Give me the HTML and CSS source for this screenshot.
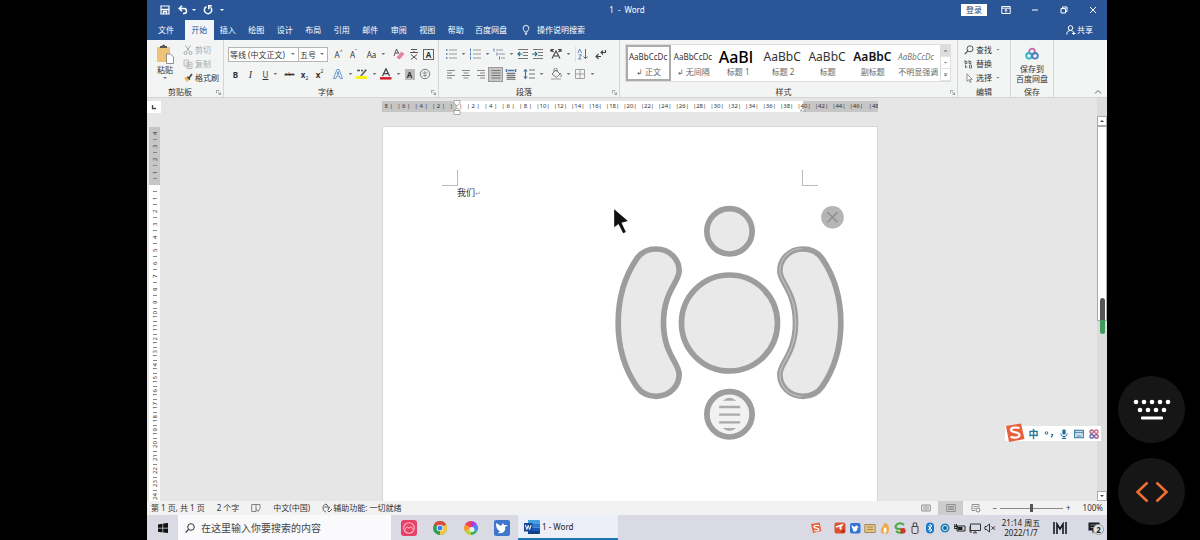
FILE: index.html
```html
<!DOCTYPE html>
<html lang="zh-CN">
<head>
<meta charset="utf-8">
<meta name="viewport" content="width=device-width, initial-scale=1">
<title>1 - Word</title>
<link rel="stylesheet" href="styles.css">
</head>
<body>
<div class="desktop">
  <header class="titlebar">
    <div class="quick">
      <button class="tbtn" aria-label="保存"><svg class="ic10" viewBox="0 0 10 10"><path d="M1 1h8v8H1z" fill="none" stroke="#fff" stroke-width="1.2"/><path d="M1 4.5h8M3.5 9V6.500h3V9" fill="none" stroke="#fff" stroke-width="1.4"/></svg></button>
      <button class="tbtn" aria-label="撤消"><svg class="ic10" viewBox="0 0 10 10"><path d="M1.500 3.500h4.500a2.500 2.500 0 0 1 0 5H5M4 .8L1.200 3.500 4 6.200" fill="none" stroke="#fff" stroke-width="1.5"/></svg></button>
      <i class="caret light"></i>
      <button class="tbtn wide" aria-label="恢复"><svg class="ic10" viewBox="0 0 10 10"><path d="M3.500 1.600a3.700 3.700 0 1 0 4 .6M8.800.8H5.800v3.400" fill="none" stroke="#fff" stroke-width="1.5"/></svg></button>
      <i class="caret light"></i>
    </div>
    <div class="doc-title">1&ensp;-&ensp;Word</div>
    <div class="window-tools">
      <button class="signin">登录</button>
      <button class="wbtn" aria-label="功能区显示选项"><svg class="ic10" viewBox="0 0 10 10"><path d="M.8 1.500h8.400v7H.8zM.8 3.200h8.400M5 7.500V4.500M3.600 5.700L5 4.400l1.400 1.300" fill="none" stroke="#fff"/></svg></button>
      <button class="wbtn" aria-label="最小化"><svg class="ic10" viewBox="0 0 10 10"><path d="M2 5h6" stroke="#fff"/></svg></button>
      <button class="wbtn" aria-label="还原"><svg class="ic10" viewBox="0 0 10 10"><path d="M2 3.500h4.500V8H2zM3.500 3.500V2h4.500v4.500H6.500" fill="none" stroke="#fff"/></svg></button>
      <button class="wbtn" aria-label="关闭"><svg class="ic10" viewBox="0 0 10 10"><path d="M2 2l6 6M8 2L2 8" stroke="#fff"/></svg></button>
    </div>
  </header>

  <nav class="tabs">
    <button class="tab file">文件</button>
    <div class="tab-set">
      <button class="tab active">开始</button><button class="tab">插入</button><button class="tab">绘图</button><button class="tab">设计</button><button class="tab">布局</button><button class="tab">引用</button><button class="tab">邮件</button><button class="tab">审阅</button><button class="tab">视图</button><button class="tab">帮助</button>
    </div>
    <button class="tab disk">百度网盘</button>
    <button class="tab tell"><svg class="ic10" viewBox="0 0 10 10"><path d="M3.800 7C3.800 5.800 2.200 5 2.200 3.200a2.800 2.800 0 0 1 5.600 0C7.800 5 6.200 5.800 6.200 7zM3.800 8.300h2.400M4.300 9.500h1.400" fill="none" stroke="#fff" stroke-width=".9"/></svg>操作说明搜索</button>
    <button class="tab share"><svg class="ic10" viewBox="0 0 10 10"><circle cx="4.500" cy="3" r="2.300" fill="none" stroke="#fff"/><path d="M.8 9.500c0-3 1.700-4 3.700-4s2.500 1 3 2M6 8.500h3.500M7.800 6.800v3" fill="none" stroke="#fff"/></svg>共享</button>
  </nav>

  <section class="ribbon" aria-label="开始">
    <div class="group g-clip">
      <div class="clip-body">
        <button class="paste"><svg class="ic20" viewBox="0 0 20 20"><path d="M2 3h13v15H2z" fill="#eec277"/><path d="M5 4V2h2a1.500 1.500 0 0 1 3 0h2v2z" fill="#555"/><path d="M11.500 10h4l3 3v6.500h-7z" fill="#fff" stroke="#777" stroke-width=".8"/></svg><span>粘贴</span><i class="caret"></i></button>
        <div class="clip-list">
          <button class="cmd off"><svg class="ic10" viewBox="0 0 10 10"><path d="M2.500.5l4 6M7.500.5l-4 6" stroke="#aaa"/><circle cx="2.500" cy="8" r="1.500" fill="none" stroke="#aaa"/><circle cx="7.500" cy="8" r="1.500" fill="none" stroke="#aaa"/></svg>剪切</button>
          <button class="cmd off"><svg class="ic10" viewBox="0 0 10 10"><path d="M1 1h4.500v6H1zM4 3.500h5v6H4zM5 5.500h3M5 7.500h3" fill="#eee" stroke="#b5b5b5" stroke-width=".9"/></svg>复制</button>
          <button class="cmd"><svg class="ic10" viewBox="0 0 10 10"><path d="M1 5l3 4 3-3-2-3z" fill="#edb95e"/><path d="M4.500 4l2.500 2.500M6 5l3-4" stroke="#444" stroke-width="1.6"/></svg>格式刷</button>
        </div>
      </div>
      <footer><span>剪贴板</span><svg class="launch" viewBox="0 0 6 6"><path d="M.5 4V.5H4M2.500 2.500l3 3M5.500 3v2.500H3" fill="none" stroke="#777" stroke-width=".8"/></svg></footer>
    </div>

    <div class="group g-font">
      <div class="rows">
        <div class="row">
          <button class="combo font-name">等线 (中文正文)<i class="caret"></i></button>
          <button class="combo font-size">五号<i class="caret"></i></button>
          <button class="ib push">A<sup>^</sup></button><button class="ib">A<sup>ˇ</sup></button>
          <button class="ib more push">Aa<i class="caret"></i></button>
          <button class="ib push" aria-label="清除格式"><svg class="ic12" viewBox="0 0 12 12"><path d="M1 8l2.500-7L6 6M2 5h3" fill="none" stroke="#555"/><path d="M3.500 9.500l5-6 3 2.500-5 5.500z" fill="#e5849a"/></svg></button>
          <button class="ib" aria-label="拼音指南"><svg class="ic12" viewBox="0 0 12 12"><path d="M3 1.500h6M2 4.500h8M6 3v2M3 6.500l6 5M9 6.500l-6 5" fill="none" stroke="#555"/></svg></button>
          <button class="ib"><b class="boxed">A</b></button>
        </div>
        <div class="row">
          <button class="ib"><b>B</b></button><button class="ib serif"><em>I</em></button><button class="ib more"><u>U</u><i class="caret"></i></button>
          <button class="ib tiny"><s>abc</s></button><button class="ib"><b>x</b><sub>2</sub></button><button class="ib"><b>x</b><sup>2</sup></button>
          <button class="ib more push" aria-label="文本效果"><svg class="ic12" viewBox="0 0 12 12"><path d="M1.500 10.500L5 1.500h2l3.500 9H8.200L7.500 8h-3l-.7 2.500zM5 6.300h2L6 3.500z" fill="#fff" stroke="#568bc4" stroke-width=".9"/></svg><i class="caret"></i></button>
          <button class="ib more" aria-label="突出显示"><svg class="ic12" viewBox="0 0 12 12"><path d="M1 2.500h3M5 2.500h2" stroke="#555" stroke-width="1.500"/><path d="M4 8l5.500-7 1.500 1.200L5.500 8.500z" fill="#666"/><path d="M0 9.500h11" stroke="#f7f01e" stroke-width="3"/></svg><i class="caret"></i></button>
          <button class="ib more" aria-label="字体颜色"><svg class="ic12" viewBox="0 0 12 12"><path d="M2.500 8L6 .8 9.500 8M3.700 5.700h4.600" fill="none" stroke="#444" stroke-width="1.300"/><path d="M0 10.300h11.500" stroke="#d4202b" stroke-width="2.500"/></svg><i class="caret"></i></button>
          <button class="ib"><b class="shade">A</b></button>
          <button class="ib" aria-label="带圈字符"><svg class="ic12" viewBox="0 0 12 12"><circle cx="6" cy="6" r="4.700" fill="none" stroke="#777"/><path d="M3.500 5h5M6 3v6M4 7.500h4" stroke="#888" stroke-width=".9"/></svg></button>
        </div>
      </div>
      <footer><span>字体</span><svg class="launch" viewBox="0 0 6 6"><path d="M.5 4V.5H4M2.500 2.500l3 3M5.500 3v2.500H3" fill="none" stroke="#777" stroke-width=".8"/></svg></footer>
    </div>

    <div class="group g-para">
      <div class="rows">
        <div class="row">
          <button class="ib more" aria-label="项目符号"><svg class="ic12" viewBox="0 0 12 12"><path d="M4 2h8M4 6h8M4 10h8" stroke="#999"/><path d="M1 2h1.500M1 6h1.500M1 10h1.500" stroke="#4d7fb5" stroke-width="1.500"/></svg><i class="caret"></i></button>
          <button class="ib more" aria-label="编号"><svg class="ic12" viewBox="0 0 12 12"><path d="M4 2h8M4 6h8M4 10h8" stroke="#999"/><path d="M1.500 .5v3M1.500 4.500v3M1.500 8.500v3" stroke="#4d7fb5"/></svg><i class="caret"></i></button>
          <button class="ib more" aria-label="多级列表"><svg class="ic12" viewBox="0 0 12 12"><path d="M3 2h7M5.500 6H12M8 10h4" stroke="#999"/><path d="M1 .5v3M4 4.500v3M6.500 8.500v3" stroke="#4d7fb5"/></svg><i class="caret"></i></button>
          <button class="ib" aria-label="减少缩进量"><svg class="ic12" viewBox="0 0 12 12"><path d="M1 1.500h10M6 4.500h5M6 7.500h5M1 10.500h10" stroke="#777"/><path d="M5.500 6H1M3 4L1 6l2 2" fill="none" stroke="#25767b" stroke-width="1.200"/></svg></button>
          <button class="ib" aria-label="增加缩进量"><svg class="ic12" viewBox="0 0 12 12"><path d="M1 1.500h10M6 4.500h5M6 7.500h5M1 10.500h10" stroke="#777"/><path d="M0 6h4.500M3 4l2 2-2 2" fill="none" stroke="#25767b" stroke-width="1.200"/></svg></button>
          <button class="ib more push" aria-label="中文版式"><svg class="ic12" viewBox="0 0 12 12"><path d="M2 10.500L6 3l4 7.500M4 8h4M1 4V1.500h3M11 4V1.500H8M1 1.500l2.500 2.500M11 1.500L8.500 4" fill="none" stroke="#444" stroke-width="1.100"/></svg><i class="caret"></i></button>
          <button class="ib push rule" aria-label="排序"><svg class="ic12" viewBox="0 0 12 12"><path d="M1 5l1.700-4L4.500 5M1.500 6.800h3L1.500 11h3" fill="none" stroke="#4d7fb5" stroke-width=".9"/><path d="M8.500 1v9.500M6.500 8.500l2 2.200 2-2.200" fill="none" stroke="#666"/></svg></button>
          <button class="ib push" aria-label="显示编辑标记"><svg class="ic12" viewBox="0 0 12 12"><path d="M1 8.500h5M3.500 6L1 8.500 3.500 11M6 4.500h4.500V2M8 2.500l-2 2 2 2" fill="none" stroke="#444" stroke-width="1.100"/></svg></button>
        </div>
        <div class="row">
          <button class="ib" aria-label="左对齐"><svg class="ic12" viewBox="0 0 12 12"><path d="M2 2.500h8M2 5h5M2 7.500h8M2 10h5" stroke="#888"/></svg></button>
          <button class="ib" aria-label="居中"><svg class="ic12" viewBox="0 0 12 12"><path d="M2 2.500h8M3.500 5h5M2 7.500h8M3.500 10h5" stroke="#888"/></svg></button>
          <button class="ib" aria-label="右对齐"><svg class="ic12" viewBox="0 0 12 12"><path d="M2 2.500h8M5 5h5M2 7.500h8M5 10h5" stroke="#888"/></svg></button>
          <button class="ib on" aria-label="两端对齐"><svg class="ic12" viewBox="0 0 12 12"><path d="M1.500 2.500h9M1.500 5h9M1.500 7.500h9M1.500 10h9" stroke="#777"/></svg></button>
          <button class="ib" aria-label="分散对齐"><svg class="ic12" viewBox="0 0 12 12"><path d="M2 4h8v7H2z" fill="#c9ccd0"/><path d="M1.500 1v3M10.500 1v3M3 2.500h6" stroke="#45719d" stroke-width="1.500"/><path d="M1.500 5.500h9M1.500 7.500h9M1.500 9.500h9M1.500 11.300h9" stroke="#777"/></svg></button>
          <button class="ib more push" aria-label="行距"><svg class="ic12" viewBox="0 0 12 12"><path d="M6 2h6M6 6h6M6 10h6" stroke="#777"/><path d="M2.500 1.500v9M.8 3.500l1.700-2 1.700 2M.8 8.500l1.700 2 1.700-2" fill="none" stroke="#45719d" stroke-width="1.100"/></svg><i class="caret"></i></button>
          <button class="ib more push" aria-label="底纹"><svg class="ic12" viewBox="0 0 12 12"><path d="M2 6l4-4 4 4-3.500 3.500zM4 4V1.500a1.500 1.500 0 0 1 3 0V4" fill="none" stroke="#777"/><path d="M10 5c1.500 2 1.500 3 .5 4" fill="none" stroke="#777"/><path d="M1 11h10" stroke="#bbb" stroke-width="1.500"/></svg><i class="caret"></i></button>
          <button class="ib more" aria-label="边框"><svg class="ic12" viewBox="0 0 12 12"><path d="M1.500 1.500h9v9h-9zM6 1.500v9M1.500 6h9" fill="none" stroke="#999" stroke-width=".9"/></svg><i class="caret"></i></button>
        </div>
      </div>
      <footer><span>段落</span><svg class="launch" viewBox="0 0 6 6"><path d="M.5 4V.5H4M2.500 2.500l3 3M5.500 3v2.500H3" fill="none" stroke="#777" stroke-width=".8"/></svg></footer>
    </div>

    <div class="group g-style">
      <div class="gallery">
        <button class="style sel"><span class="s-body">AaBbCcDc</span><small>↲ 正文</small></button>
        <button class="style"><span class="s-body">AaBbCcDc</span><small>↲ 无间隔</small></button>
        <button class="style"><span class="s-h1">AaBl</span><small>标题 1</small></button>
        <button class="style"><span class="s-h2">AaBbC</span><small>标题 2</small></button>
        <button class="style"><span class="s-h2">AaBbC</span><small>标题</small></button>
        <button class="style"><span class="s-sub">AaBbC</span><small>副标题</small></button>
        <button class="style"><span class="s-em">AaBbCcDc</span><small>不明显强调</small></button>
        <div class="gal-scroll"><button class="dim" aria-label="上一行"><i class="caret up"></i></button><button aria-label="下一行"><i class="caret"></i></button><button aria-label="其他"><i class="caret bar"></i></button></div>
      </div>
      <footer><span>样式</span><svg class="launch" viewBox="0 0 6 6"><path d="M.5 4V.5H4M2.500 2.500l3 3M5.500 3v2.500H3" fill="none" stroke="#777" stroke-width=".8"/></svg></footer>
    </div>

    <div class="group g-edit">
      <div class="edit-list">
        <button class="cmd"><svg class="ic10" viewBox="0 0 10 10"><circle cx="6" cy="3.800" r="3" fill="none" stroke="#555"/><path d="M3.800 6L.8 9.200" stroke="#555" stroke-width="1.200"/></svg>查找<i class="caret"></i></button>
        <button class="cmd"><svg class="ic10" viewBox="0 0 10 10"><path d="M1 1v3.500h2V2.500H1M5 1v3.500h2V2.500H5M5.500 6h2v3h-2zM3.500 8L1 8M1.500 5.500V9" fill="none" stroke="#666" stroke-width=".9"/></svg>替换</button>
        <button class="cmd"><svg class="ic10" viewBox="0 0 10 10"><path d="M3 .8v7.500l1.800-1.600L6 9.500l1-.5-1.200-2.600h2.400z" fill="#fff" stroke="#777" stroke-width=".8"/></svg>选择<i class="caret"></i></button>
      </div>
      <footer><span>编辑</span></footer>
    </div>

    <div class="group g-save">
      <button class="save-disk"><svg class="ic14" viewBox="0 0 14 14"><g fill="none" stroke-width="1.800"><circle cx="7" cy="4.500" r="2.800" stroke="#c565a8"/><circle cx="4" cy="8.800" r="2.800" stroke="#26b5c8"/><circle cx="10" cy="8.800" r="2.800" stroke="#4b7fc4"/></g></svg><span>保存到<br>百度网盘</span></button>
      <footer><span>保存</span></footer>
    </div>
    <button class="collapse" aria-label="折叠功能区"><svg class="ic10" viewBox="0 0 10 10"><path d="M2 6.500L5 3.500l3 3" fill="none" stroke="#666"/></svg></button>
  </section>

  <main class="workspace">
    <div class="left-rail">
      <div class="corner"><svg class="ic6" viewBox="0 0 6 6"><path d="M1.500 1v3.500H5" fill="none" stroke="#444" stroke-width="1.300"/></svg></div>
      <div class="vruler">
        <div class="v dark"><span>4</span></div><div class="v dark"><span>3</span></div><div class="v dark"><span>2</span></div><div class="v dark"><span>1</span></div><div class="v zero"></div>
        <div class="v"><span>1</span></div><div class="v"><span>2</span></div><div class="v"><span>3</span></div><div class="v"><span>4</span></div><div class="v"><span>5</span></div><div class="v"><span>6</span></div><div class="v"><span>7</span></div><div class="v"><span>8</span></div><div class="v"><span>9</span></div><div class="v"><span>10</span></div><div class="v"><span>11</span></div><div class="v"><span>12</span></div><div class="v"><span>13</span></div><div class="v"><span>14</span></div><div class="v"><span>15</span></div><div class="v"><span>16</span></div><div class="v"><span>17</span></div><div class="v"><span>18</span></div><div class="v"><span>19</span></div><div class="v"><span>20</span></div><div class="v"><span>21</span></div><div class="v"><span>22</span></div><div class="v"><span>23</span></div><div class="v"><span>24</span></div>
      </div>
    </div>

    <div class="canvas">
      <div class="hruler">
        <div class="ticks">
          <span>| 8 |</span><span>| 6 |</span><span>| 4 |</span><span>| 2 |</span><span>|&ensp;&ensp;|</span><span>| 2 |</span><span>| 4 |</span><span>| 6 |</span><span>| 8 |</span><span>|10|</span><span>|12|</span><span>|14|</span><span>|16|</span><span>|18|</span><span>|20|</span><span>|22|</span><span>|24|</span><span>|26|</span><span>|28|</span><span>|30|</span><span>|32|</span><span>|34|</span><span>|36|</span><span>|38|</span><span>|40|</span><span>|42|</span><span>|44|</span><span>|46|</span><span>|48</span>
        </div>
        <svg class="indent" viewBox="0 0 8 16"><path d="M1 .5h6v2.500L4 6 1 3zM4 8l3 2.500H1zM1 10.500h6v4H1z" fill="#fff" stroke="#999" stroke-width=".8"/></svg>
        <svg class="indent end" viewBox="0 0 8 16"><path d="M4 8l3 3H1z" fill="#fff" stroke="#999" stroke-width=".8"/></svg>
      </div>
      <article class="page">
        <div class="crops"><i class="crop tl"></i><i class="crop tr"></i></div>
        <p class="text">我们<span class="mark">↵</span></p>
        <svg class="mouse-pad" viewBox="0 0 776 765" role="img" aria-label="虚拟鼠标">
          <g fill="#e9e9e9" stroke="#9d9d9d" stroke-width="17">
            <circle cx="388" cy="109" r="68"/>
            <circle cx="388" cy="384" r="144"/>
            <path id="wing" d="M54 383C54 300 80 235 110 191 125 169 148 162 168 162 208 162 237 192 237 228 237 262 190 290 190 383 190 476 237 504 237 538 237 574 208 604 168 604 148 604 125 597 110 575 80 531 54 466 54 383Z"/>
            <use href="#wing" transform="translate(776 0) scale(-1 1)"/>
            <circle cx="388" cy="658" r="68"/>
          </g>
          <path d="M605 161c-40 0-66 31-66 67 0 34 47 62 47 155s-47 121-47 155c0 36 26 66 66 66" fill="none" stroke="#bdbdbd" stroke-width="4"/>
          <circle cx="388" cy="658" r="58" fill="#f2f2f2"/>
          <path d="M357 636h63M357 659h63M357 682h63" stroke="#aaa" stroke-width="7"/>
          <path d="M368 617q20-18 40 0zM368 699q20 18 40 0z" fill="#aaa"/>
          <circle cx="697" cy="67" r="34" fill="#b5b5b5"/>
          <path d="M682 52l30 30M712 52l-30 30" stroke="#8d8d8d" stroke-width="4"/>
          <path d="M42 43v54l13-10 14 28 8-4-13-28 19-5z" fill="#111"/>
        </svg>
      </article>
      <div class="ime">
        <svg class="ime-logo" viewBox="0 0 20 20"><path d="M1 3l15-2.500 3.500 15.500L4 19z" fill="#e8603c"/><path d="M14.500 5c-4-1-8.500-.5-8.500 2 0 3 8.500 1.500 8.500 5 0 2.800-5 3.200-9 1.800" fill="none" stroke="#fff" stroke-width="2.200"/></svg>
        <button>中</button>
        <button aria-label="标点"><svg class="ic10" viewBox="0 0 10 10"><circle cx="2.500" cy="4" r="1.300" fill="none" stroke="#25719d"/><path d="M7 5.500h1.500v1L7 8.500" fill="none" stroke="#25719d" stroke-width="1.200"/></svg></button>
        <button aria-label="语音"><svg class="ic10" viewBox="0 0 10 10"><rect x="3.300" y=".3" width="3.400" height="5.500" rx="1.700" fill="#25719d"/><path d="M1.800 4.500c0 4 6.400 4 6.400 0M5 7.500v2M3 9.500h4" fill="none" stroke="#25719d"/></svg></button>
        <button aria-label="键盘"><svg class="ic10" viewBox="0 0 10 10"><path d="M.7 1.200h8.600v7.600H.7zM.7 3.200h8.600M2.200 5h1M4.500 5h1M6.800 5h1M2.500 7h5" fill="none" stroke="#25719d" stroke-width="1.100"/></svg></button>
        <button aria-label="工具箱"><svg class="ic10" viewBox="0 0 10 10"><g fill="none" stroke-width="1.400"><circle cx="2.700" cy="2.700" r="1.700" stroke="#a7618f"/><circle cx="7.300" cy="2.700" r="1.700" stroke="#d4677c"/><rect x="1" y="5.800" width="3.400" height="3.200" rx="1" stroke="#596db2"/><rect x="5.700" y="5.800" width="3.400" height="3.200" rx="1" stroke="#a05c94"/></g></svg></button>
      </div>
    </div>

    <div class="scrollbar">
      <button aria-label="向上"><i class="caret up"></i></button>
      <div class="thumb"></div>
      <div class="track"></div>
      <button aria-label="向下"><i class="caret"></i></button>
      <i class="pill"></i>
    </div>
  </main>

  <div class="status">
    <span>第 1 页, 共 1 页</span><span>2 个字</span>
    <svg class="ic10" viewBox="0 0 10 10"><path d="M5 1.500H.7v7H5zM5 1.500h4v3M5 6l2 2.500 2.500-4" fill="none" stroke="#777" stroke-width=".9"/></svg>
    <span>中文(中国)</span>
    <span class="access"><svg class="ic10" viewBox="0 0 10 10"><path d="M4 1C0 2 0 8 4 9M4 1l2 2M2.500 4h5L6 7M7 9l3-3M7 9L5.500 7.500" fill="none" stroke="#555"/></svg>辅助功能: 一切就绪</span>
    <div class="status-right">
      <div class="views">
        <button aria-label="阅读视图"><svg class="ic10" viewBox="0 0 10 10"><path d="M.7 2h8.600v6H.7zM5 2v6M2 4h2M2 6h2M6 4h2M6 6h2" fill="none" stroke="#888" stroke-width=".9"/></svg></button>
        <button class="on" aria-label="页面视图"><svg class="ic10" viewBox="0 0 10 10"><path d="M.7 1.500h8.600v7H.7zM2 3.500h6M2 5h6M2 6.500h6" fill="none" stroke="#888" stroke-width=".9"/></svg></button>
        <button aria-label="Web 版式"><svg class="ic10" viewBox="0 0 10 10"><path d="M1 1.500h7v3M1 1.500v6h3M2.500 3.500h4M2.500 5.500h2" fill="none" stroke="#888" stroke-width=".9"/><circle cx="7" cy="7" r="2" fill="none" stroke="#888"/></svg></button>
      </div>
      <div class="zoom"><span>−</span><input type="range" min="0" max="100" value="50" aria-label="缩放"><span>+</span></div>
    </div>
    <span>100%</span>
  </div>

  <div class="taskbar">
    <button class="start" aria-label="开始"><svg class="ic10" viewBox="0 0 10 10"><path d="M0 1.400l4.500-.7v4H0zM5.200.6L10 0v4.700H5.200zM0 5.400h4.500v4L0 8.700zM5.200 5.400H10V10l-4.800-.6z" fill="#111"/></svg></button>
    <label class="search"><svg class="ic10" viewBox="0 0 10 10"><circle cx="6" cy="4" r="3.300" fill="none" stroke="#333"/><path d="M3.700 6.300L.6 9.500" stroke="#333" stroke-width="1.100"/></svg><input type="text" placeholder="在这里输入你要搜索的内容" aria-label="搜索"></label>
    <div class="pins">
      <button aria-label="应用"><svg class="ic16" viewBox="0 0 16 16"><rect width="16" height="16" rx="3" fill="#e84169"/><circle cx="8" cy="8" r="5.300" fill="none" stroke="#fbb" stroke-width="1.100"/><path d="M4.500 9.500c0-3 3-3 3.500-1 .5-2 3.500-2 3.500 1" fill="none" stroke="#fcc"/></svg></button>
      <button aria-label="Chrome"><svg class="ic14" viewBox="0 0 14 14"><circle cx="7" cy="7" r="7" fill="#2f9e57"/><path d="M7 7L.9 3.500A7 7 0 0 1 13.100 3.500z" fill="#dd4a3c"/><path d="M7 7l6.100-3.500A7 7 0 0 1 7 14z" fill="#f5c63c"/><circle cx="7" cy="7" r="3.300" fill="#fff"/><circle cx="7" cy="7" r="2.500" fill="#3f7fe0"/></svg></button>
      <button aria-label="浏览器"><svg class="ic14" viewBox="0 0 14 14"><path d="M7 7L7 0a7 7 0 0 1 6 3.500z" fill="#a43ee0"/><path d="M7 7l6-3.500a7 7 0 0 1 0 7z" fill="#3b8bf0"/><path d="M7 7l6 3.500A7 7 0 0 1 7 14z" fill="#2fb36a"/><path d="M7 7v7a7 7 0 0 1-6-3.500z" fill="#b8d531"/><path d="M7 7l-6 3.500a7 7 0 0 1 0-7z" fill="#f79a28"/><path d="M7 7L1 3.500A7 7 0 0 1 7 0z" fill="#ef415d"/><circle cx="8" cy="8.500" r="2.500" fill="#f3ecf5"/></svg></button>
      <button aria-label="飞鸟"><svg class="ic16" viewBox="0 0 16 16"><rect width="16" height="16" rx="2" fill="#3f77cf"/><path d="M2 3l5 3 2-3 1 2h4l-3 2c1 4-2 7-7 6l2-2C3 10 2 7 2 3z" fill="#fff"/></svg></button>
    </div>
    <button class="task"><svg class="ic16" viewBox="0 0 16 16"><path d="M4 1h11a1 1 0 0 1 1 1v3H4z" fill="#45a0e0"/><path d="M4 5h12v3.500H4z" fill="#2b7cd3"/><path d="M4 8.500h12V12H4z" fill="#185abd"/><path d="M4 12h12v2a1 1 0 0 1-1 1H4z" fill="#123f87"/><path d="M0 4h8.500v8.500H0z" fill="#174a9c"/><path d="M1.500 6l1.300 4.500L4.200 6.500l1.400 4L7 6" fill="none" stroke="#fff"/></svg>1 - Word</button>
    <div class="tray">
      <svg class="ic12" viewBox="0 0 12 12"><path d="M1 2l8.500-1.500L11.500 9 3 11z" fill="#e7643c"/><path d="M9 3.500C6 3 3.500 3.500 4 5s5 .7 5 2.500-3 1.500-5 1" fill="none" stroke="#fff" stroke-width="1.200"/></svg>
      <span class="tray-gap"></span>
      <svg class="ic12" viewBox="0 0 12 12"><rect x=".5" y=".5" width="11" height="11" rx="2" fill="#dc5230"/><path d="M2 5l6-2-2 3 3 3" fill="none" stroke="#fff" stroke-width="1.500"/><circle cx="9" cy="9" r="2" fill="#b8321d"/></svg>
      <svg class="ic12" viewBox="0 0 12 12"><rect x="1" y="1" width="10.500" height="10.500" rx="2" fill="#2f76d2"/><path d="M2.500 3l3 2 2-2 .7 1.500H10L8.500 6c0 3-2 4-4.500 3.500C5 8 2.500 6 2.500 3z" fill="#fff"/></svg>
      <svg class="ic12" viewBox="0 0 12 12"><path d="M.8 2.500h10.400v8H.8z" fill="#ecc477" stroke="#8f7a50" stroke-width=".8"/><path d="M3 5h6M3 7.500h6" stroke="#8b8b80"/></svg>
      <svg class="ic12" viewBox="0 0 12 12"><path d="M6 .5c4 2 5 6 3 11H3C0 7 4 5 6 .5z" fill="#f0a945"/><path d="M6 5c3 3 1 5 0 6.500C4 10 4 7 6 5z" fill="#fff"/></svg>
      <svg class="ic12" viewBox="0 0 12 12"><path d="M10 3C6-1 0 3 2 6c2 2 7 0 7 3s-5 2-7 0" fill="none" stroke="#48a83c" stroke-width="2"/><circle cx="9" cy="8.800" r="2.700" fill="#d53329"/></svg>
      <svg class="ic12" viewBox="0 0 12 12"><path d="M3 4.500h6V10a1.500 1.500 0 0 1-1.500 1.500h-3A1.500 1.500 0 0 1 3 10zM4.300 4.500V1h3.400v3.500" fill="none" stroke="#444"/></svg>
      <svg class="ic12" viewBox="0 0 12 12"><rect x="2" y=".5" width="8" height="11" rx="4" fill="#1579c7"/><path d="M4 4l4 4-2 1.800V2.200L8 4 4 8" fill="none" stroke="#fff" stroke-width=".9"/></svg>
      <svg class="ic12" viewBox="0 0 12 12"><circle cx="6" cy="6" r="4.500" fill="#2688b9"/><circle cx="6" cy="6" r="2.400" fill="#155b93" stroke="#d8f1fa"/></svg>
      <svg class="ic12" viewBox="0 0 12 12"><path d="M3 4h8v5H3zM.8 2v2.500M2.500 2v2.500M.3 4.500h3v2h-3z" fill="none" stroke="#222"/><path d="M4 5h4.500v3H4z" fill="#222"/></svg>
      <svg class="ic12" viewBox="0 0 12 12"><path d="M1.500 2h10v6.500h-10zM4 10.800h4M6 8.500v2M1 4v6h2" fill="none" stroke="#333"/></svg>
      <svg class="ic12" viewBox="0 0 12 12"><path d="M1 4.500h1.500L5.500 2v8L2.500 7.500H1zM7.500 4.300l3.500 3.500M11 4.300L7.500 7.800" fill="none" stroke="#333"/></svg>
    </div>
    <div class="clock"><span>21:14 周五</span><span>2022/1/7</span></div>
    <svg class="mark-m" viewBox="0 0 14 12"><path d="M1 0v12M13 0v12M4 12V2l3 5 3-5v10" fill="none" stroke="#16161e" stroke-width="1.600"/></svg>
    <button class="notify" aria-label="通知"><svg class="ic12" viewBox="0 0 12 12"><path d="M.5.500h11v8H7L4.500 11.500v-3h-4z" fill="#1b1b25"/><path d="M2.500 3h7M2.500 5.500h7" stroke="#aaa" stroke-width=".7"/></svg><b>2</b></button>
  </div>
</div>

<aside class="remote">
  <button aria-label="键盘"><svg class="pad-icon" viewBox="0 0 40 24"><g fill="#fff"><circle cx="4" cy="4" r="2.300"/><circle cx="12" cy="4" r="2.300"/><circle cx="20" cy="4" r="2.300"/><circle cx="28" cy="4" r="2.300"/><circle cx="36" cy="4" r="2.300"/><circle cx="8" cy="12" r="2.300"/><circle cx="16" cy="12" r="2.300"/><circle cx="24" cy="12" r="2.300"/><circle cx="32" cy="12" r="2.300"/><rect x="9" y="18.500" width="22" height="3" rx="1"/></g></svg></button>
  <button aria-label="左右切换"><svg class="pad-icon" viewBox="0 0 40 24"><path d="M15.500 2.500L5.500 12l10 9.500M24.500 2.500l10 9.500-10 9.500" fill="none" stroke="#ee7131" stroke-width="2.500"/></svg></button>
</aside>
</body>
</html>
```

FILE: styles.css
```css
* { box-sizing: border-box; }
body {
  margin: 0;
  min-height: 100vh;
  display: grid;
  grid-template-columns: 147px minmax(0, 1fr) 93px;
  background: #000;
  color: #333;
  font: 8px/12px "Noto Sans", "Noto Sans CJK SC", sans-serif;
}
button, input { font: inherit; color: inherit; }
button { border: 0; padding: 0; margin: 0; background: none; white-space: nowrap; }
svg { display: block; flex: none; }
.ic6 { width: 6px; height: 6px; }
.ic10 { width: 10px; height: 10px; }
.ic12 { width: 12px; height: 12px; }
.ic14 { width: 14px; height: 14px; }
.ic16 { width: 16px; height: 16px; }
.ic20 { width: 20px; height: 20px; }

.caret {
  flex: none;
  width: 4px;
  height: 2px;
  background: #777;
  clip-path: polygon(0 0, 100% 0, 50% 100%);
}
.caret.light { background: #fff; }
.caret.up { clip-path: polygon(50% 0, 100% 100%, 0 100%); }
.caret.bar { height: 4px; clip-path: polygon(0 0, 100% 0, 100% 25%, 0 25%, 0 50%, 100% 50%, 50% 100%, 0 50%); }

.desktop {
  grid-column: 2;
  min-width: 0;
  height: 100vh;
  display: grid;
  grid-template-rows: 20px 20px 58px minmax(0, 1fr) 14px 25px;
  background: #e6e6e6;
}

/* Title bar */
.titlebar {
  display: grid;
  grid-template-columns: 1fr auto 1fr;
  align-items: center;
  background: #2a5698;
  color: #fff;
}
.quick { display: flex; align-items: center; padding-left: 9px; }
.tbtn { width: 18px; display: grid; place-items: center; }
.tbtn.wide { width: 24px; }
.window-tools { display: flex; justify-content: flex-end; align-items: center; }
.signin { width: 26px; height: 12px; margin-right: 4px; background: #fff; color: #2a4670; line-height: 12px; }
.wbtn { width: 29px; display: grid; place-items: center; }

/* Tabs */
.tabs { display: flex; background: #2a5698; color: #fff; }
.tab { height: 20px; line-height: 20px; text-align: center; }
.tab.file { width: 38px; }
.tab-set { flex: 0 0 285px; display: flex; }
.tab-set .tab { flex: 1; }
.tab.active { background: #f4f5f7; color: #2a5698; }
.tab.disk { width: 42px; }
.tab.tell { display: flex; align-items: center; gap: 6px; margin-left: 9px; }
.tab.share { display: flex; align-items: center; gap: 1px; margin-left: auto; padding-right: 14px; }

/* Ribbon */
.ribbon { display: flex; background: #f3f4f4; border-bottom: 1px solid #d4d4d4; }
.group {
  display: flex;
  flex-direction: column;
  justify-content: space-between;
  padding-top: 4px;
  border-right: 1px solid #d5d5d5;
}
.group footer { position: relative; height: 11px; line-height: 11px; text-align: center; }
.g-clip footer, .g-font footer, .g-para footer, .g-style footer { padding-right: 10px; }
.launch { position: absolute; right: 2px; bottom: 2px; width: 5px; height: 5px; }
.g-clip { flex: 0 0 77px; }
.g-font { flex: 0 0 215px; }
.g-para { flex: 0 0 181px; }
.g-style { flex: 0 1 338px; min-width: 0; }
.g-edit { flex: 0 0 53px; }
.g-save { flex: 0 0 43px; }

.clip-body { display: flex; }
.paste { width: 36px; display: flex; flex-direction: column; align-items: center; }
.paste span { line-height: 11px; margin-bottom: 2px; }
.clip-list, .edit-list { display: flex; flex-direction: column; gap: 3px; }
.cmd { display: flex; align-items: center; gap: 2px; height: 11px; line-height: 11px; }
.cmd .caret { margin-left: 2px; }
.cmd.off { color: #aaa; }
.edit-list { padding-left: 6px; }

.rows { display: flex; flex-direction: column; gap: 4px; padding: 2px 0 0 4px; }
.row { display: flex; align-items: center; height: 16px; }
.combo {
  height: 15px;
  line-height: 13px;
  display: flex;
  align-items: center;
  justify-content: space-between;
  padding: 0 3px 0 1px;
  border: 1px solid #b5b5b5;
  background: #fff;
}
.font-name { width: 71px; }
.font-size { width: 29px; border-left: 0; }
.ib { width: 15px; height: 15px; line-height: 15px; display: flex; align-items: center; justify-content: center; }
.ib.more { width: 24px; gap: 5px; }
.ib.push { margin-left: 3px; }
.ib.on { background: #c6c6c6; border: 1px solid #999; }
.ib.rule { border-left: 1px solid #ddd; }
.ib.serif { font-family: "Liberation Serif", serif; font-size: 10px; }
.ib.tiny { font-size: 6px; }
.ib sup, .ib sub { font-size: 5px; line-height: 8px; }
.ib sup { align-self: flex-start; }
.ib sub { align-self: flex-end; }
.boxed { width: 11px; height: 11px; line-height: 9px; border: 1px solid #666; }
.shade { width: 10px; height: 11px; line-height: 11px; background: #bbb; }

.gallery { display: flex; height: 38px; margin: 0 6px 0 5px; background: #fff; border: 1px solid #ddd; }
.style {
  flex: 1 1 0;
  min-width: 0;
  display: flex;
  flex-direction: column;
  justify-content: space-between;
  padding: 0 1px 2px;
  border: 2px solid transparent;
}
.style.sel { border-color: #ababab; }
.style span { line-height: 20px; text-align: left; }
.style small { font-size: 8px; line-height: 10px; text-align: center; color: #666; }
.s-body { font-size: 8px; }
.style .s-h1 { font-size: 16px; color: #000; font-weight: 500; }
.s-h2 { font-size: 12px; }
.s-sub { font-size: 12px; font-weight: 600; color: #111; }
.s-em { font-size: 8px; font-style: italic; color: #777; }
.gal-scroll { flex: 0 0 10px; display: grid; grid-template-rows: repeat(3, 1fr); border-left: 1px solid #ddd; }
.gal-scroll button { display: grid; place-items: center; border-bottom: 1px solid #e5e5e5; }
.gal-scroll .dim { background: #ddd; }
.save-disk { display: flex; flex-direction: column; align-items: center; gap: 3px; padding-top: 3px; line-height: 10px; }
.collapse { margin-left: auto; padding-right: 4px; display: flex; align-items: flex-end; }

/* Workspace */
.workspace { display: flex; min-height: 0; }
.left-rail { flex: 0 0 16px; display: flex; flex-direction: column; padding-top: 3px; min-height: 0; }
.corner { flex: none; width: 14px; height: 12px; display: grid; place-items: center; background: #fff; }
.vruler { flex: 1; min-height: 0; overflow: hidden; margin: 14px 3px 0 2px; background: #fff; }
.v { height: 13px; display: flex; flex-direction: column; align-items: center; }
.v::after { content: ""; width: 4px; height: 1px; background: #888; }
.v span {
  flex: 1;
  writing-mode: vertical-rl;
  transform: rotate(180deg);
  font-size: 6px;
  line-height: 10px;
  text-align: center;
}
.v.dark { background: #c6c6c6; }
.v.zero { justify-content: flex-end; background: linear-gradient(#c6c6c6 50%, #fff 50%); }

.canvas { position: relative; z-index: 1; flex: 1; min-width: 0; display: flex; flex-direction: column; align-items: center; padding-top: 3px; }
.hruler {
  position: relative;
  flex: none;
  width: 496px;
  height: 11px;
  background: linear-gradient(90deg, #c6c6c6 75px, #fff 75px, #fff 421px, #c6c6c6 421px);
}
.ticks { height: 11px; overflow: hidden; display: flex; justify-content: center; }
.ticks span { flex: 0 0 auto; width: calc(505px / 29); font-size: 6px; line-height: 11px; text-align: center; white-space: nowrap; }
.indent { position: absolute; left: 71px; top: -1px; width: 8px; height: 16px; }
.indent.end { left: 417px; }
.page {
  position: relative;
  flex: 1;
  width: 496px;
  margin-top: 14px;
  border: 1px solid #d6d6d6;
  border-bottom: 0;
  background: #fff;
}
.crops { display: flex; justify-content: space-between; padding: 43px 59px 0; }
.crop { width: 16px; height: 16px; border: 0 solid #bbb; border-bottom-width: 1px; }
.crop.tl { border-right-width: 1px; }
.crop.tr { border-left-width: 1px; }
.text { margin: 0; padding-left: 74px; font-size: 9px; line-height: 13px; }
.mark { font-size: 7px; color: #999; }
.mouse-pad { position: absolute; left: 217px; top: 68px; width: 259px; height: 255px; }

.ime { position: absolute; right: -4px; bottom: 60px; display: flex; align-items: center; height: 15px; padding-left: 21px; background: #fff; }
.ime button { width: 15px; height: 15px; display: grid; place-items: center; color: #25719d; font-weight: 700; font-size: 10px; }
.ime-logo { position: absolute; left: 0; top: -3px; width: 20px; height: 20px; }

.scrollbar { position: relative; flex: 0 0 10px; display: flex; flex-direction: column; padding-top: 18px; background: #dcdcdc; }
.scrollbar button { height: 10px; display: grid; place-items: center; background: #fff; border: 1px solid #aaa; }
.scrollbar .caret { background: #444; }
.thumb { flex: 194; background: #fff; border: 1px solid #aaa; }
.track { flex: 171; }
.pill {
  position: absolute;
  right: 2px;
  top: 200px;
  width: 5px;
  height: 36px;
  border-radius: 3px;
  background: linear-gradient(#555 22px, #3f9a5e 22px);
}

/* Status bar */
.status { display: flex; align-items: center; gap: 12px; padding: 0 4px; background: #f2f2f3; white-space: nowrap; }
.access { display: flex; align-items: center; gap: 1px; }
.status-right { display: flex; align-self: stretch; gap: 4px; margin-left: auto; }
.views { display: flex; }
.views button { width: 25px; display: grid; place-items: center; }
.views .on { background: #cdcdcd; }
.zoom { display: flex; align-items: center; gap: 3px; }
.zoom input { appearance: none; width: 63px; height: 10px; margin: 0; background: linear-gradient(#888, #888) center / 100% 1px no-repeat; }
.zoom input::-webkit-slider-thumb { appearance: none; width: 3px; height: 8px; background: #555; }

/* Taskbar */
.taskbar { display: flex; align-items: stretch; background: #d9dae4; color: #222; }
.taskbar button { display: grid; place-items: center; }
.start { width: 31px; }
.search { flex: 0 1 213px; display: flex; align-items: center; gap: 6px; padding-left: 7px; background: #fafafc; }
.search input { flex: 1; min-width: 0; border: 0; padding: 0; background: none; font-size: 10px; line-height: 16px; }
.search input::placeholder { color: #444; opacity: 1; }
.pins { display: flex; padding: 0 1px 0 2px; }
.pins button { width: 31px; }
.taskbar .task { flex: 0 1 100px; display: flex; align-items: center; gap: 2px; padding-left: 6px; background: #eceff7; border-bottom: 2px solid #1b78b5; font-size: 8px; }
.tray { display: flex; align-items: center; gap: 3px; margin-left: auto; }
.tray-gap { width: 6px; }
.clock { display: flex; flex-direction: column; justify-content: center; width: 50px; font-size: 8px; line-height: 10px; text-align: center; }
.mark-m { width: 14px; height: 12px; margin: 0 15px 0 7px; align-self: center; }
.notify { position: relative; width: 24px; margin-right: 1px; }
.notify b { position: absolute; right: 2px; top: 9px; width: 11px; height: 11px; border: 1px solid #999; border-radius: 50%; background: #e3e3ea; line-height: 9px; }

/* Floating controls of the remote client */
.remote { display: flex; flex-direction: column; align-items: center; justify-content: flex-end; gap: 15px; padding: 0 4px 15px 0; }
.remote button { width: 67px; height: 67px; border-radius: 50%; background: #161616; display: grid; place-items: center; }
.pad-icon { width: 40px; height: 24px; }
```
